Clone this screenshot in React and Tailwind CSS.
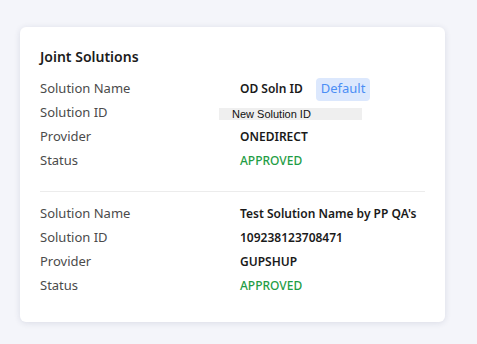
import React from 'react';

const sections = [
    {
        name: 'OD Soln ID',
        isDefault: true,
        solutionId: null,
        provider: 'ONEDIRECT',
        status: 'APPROVED',
    },
    {
        name: "Test Solution Name by PP QA's",
        isDefault: false,
        solutionId: '109238123708471',
        provider: 'GUPSHUP',
        status: 'APPROVED',
    },
];

const Row = ({ label, children }) => (
    <div className="grid grid-cols-[200px_1fr] items-center h-6">
        <div className="text-[13px] text-[#4b4b4b]">{label}</div>
        <div className="flex items-center">{children}</div>
    </div>
);

const App = () => {
    return (
        <div
            className="min-h-[344px] w-full bg-[#f4f5fa] pt-[27px] pl-5"
            style={{ fontFamily: '"Noto Sans", "Open Sans", sans-serif' }}
        >
            <div className="w-[425px] bg-white rounded-md shadow-[0_1px_6px_rgba(30,40,80,0.12)] pt-5 pb-6 px-5">
                <h2 className="text-[14px] leading-5 font-semibold text-[#1c1c1c] mb-[10px]">Joint Solutions</h2>

                {sections.map((s, i) => (
                    <div key={i}>
                        {i > 0 && <div className="h-px bg-[#ececec] mt-[18px] mb-[10px]" />}
                        <Row label="Solution Name">
                            <span className="text-[12px] font-semibold text-[#1a1a1a]">{s.name}</span>
                            {s.isDefault && (
                                <span className="ml-[13px] h-[23px] px-[5px] flex items-center rounded bg-[#dce8fd] text-[13px] text-[#4b8ef5]">
                                    Default
                                </span>
                            )}
                        </Row>
                        <Row label="Solution ID">
                            {s.solutionId ? (
                                <span className="text-[12px] font-semibold text-[#1a1a1a]">{s.solutionId}</span>
                            ) : (
                                <span
                                    className="-ml-[21px] mt-px w-[143px] h-3 pl-[13px] bg-[#efefef] text-[11px] leading-3 text-[#111]"
                                    style={{ fontFamily: '"Liberation Sans", Arial, sans-serif' }}
                                >
                                    New Solution ID
                                </span>
                            )}
                        </Row>
                        <Row label="Provider">
                            <span className="text-[12px] font-semibold text-[#1a1a1a]">{s.provider}</span>
                        </Row>
                        <Row label="Status">
                            <span className="text-[12px] font-medium text-[#1f9d45]">{s.status}</span>
                        </Row>
                    </div>
                ))}
            </div>
        </div>
    );
};

export default App;
